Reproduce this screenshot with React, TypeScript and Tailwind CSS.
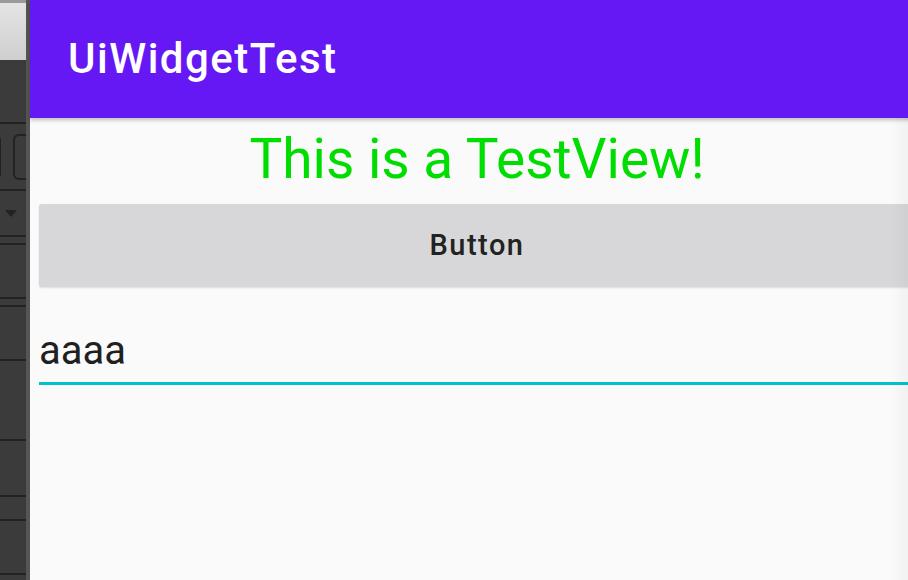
export default function App() {
  return (
    <div className="flex h-[580px] w-[908px] overflow-hidden bg-[#3b3b3b] font-['Roboto',sans-serif]">
      {/* left IDE strip */}
      <div className="flex w-[26px] shrink-0 flex-col">
        <div className="h-[60px] shrink-0 border-t-[3px] border-[#9a9a9a] bg-gradient-to-b from-[#e4e4e4] to-[#cfcfcf]" />
        <div className="h-[64px] shrink-0 border-b-2 border-[#222]" />
        <div className="flex h-[67px] shrink-0 items-center gap-[12px] border-b-2 border-[#222] pl-0">
          <div className="-ml-[14px] h-[46px] w-[21px] rounded-[6px] border-2 border-[#222]" />
          <div className="h-[46px] w-[20px] rounded-l-[6px] border-2 border-r-0 border-[#222]" />
        </div>
        <div className="flex h-[46px] shrink-0 items-center justify-center border-b-2 border-[#222]">
          <div className="ml-[-4px] h-0 w-0 border-x-[6px] border-t-[7px] border-x-transparent border-t-[#222]" />
        </div>
        <div className="h-[8px] shrink-0 border-b-2 border-[#222]" />
        <div className="h-[54px] shrink-0 border-b-2 border-[#222]" />
        <div className="h-[8px] shrink-0 border-b-2 border-[#222]" />
        <div className="h-[54px] shrink-0 border-b-2 border-[#222]" />
        <div className="h-[80px] shrink-0 border-b-2 border-[#222]" />
        <div className="h-[56px] shrink-0 border-b-2 border-[#222]" />
        <div className="h-[24px] shrink-0 border-b-2 border-[#222]" />
        <div className="h-[54px] shrink-0 border-b-2 border-[#222]" />
      </div>
      <div className="w-[4px] shrink-0 bg-[#555]" />

      {/* phone screen */}
      <div className="relative flex w-[894px] shrink-0 flex-col bg-[#fafafa]">
        <div className="relative z-10 flex h-[118px] shrink-0 items-center bg-[#6518f4] pl-[38px] shadow-[0_2px_4px_rgba(0,0,0,0.25)]">
          <span className="text-[42px] font-medium leading-none tracking-[1.5px] text-white">UiWidgetTest</span>
        </div>
        <div className="flex h-[82px] shrink-0 items-center justify-center">
          <span className="text-[55px] leading-none text-[#00dd00]">This is a TestView!</span>
        </div>
        <div className="px-[9px] pt-[4px]">
          <div className="flex h-[83px] items-center justify-center rounded-[3px] bg-[#d7d7d9] shadow-[0_1px_2px_rgba(0,0,0,0.12)]">
            <span className="text-[29px] font-medium leading-none tracking-[1.5px] text-[#222]">Button</span>
          </div>
        </div>
        <div className="px-[9px] pt-[44px]">
          <div className="border-b-[3px] border-[#00c3c9] pb-[11px]">
            <span className="text-[40px] leading-none text-[#202020]">aaaa</span>
          </div>
        </div>
        {/* emulator edge shade */}
        <div className="pointer-events-none absolute inset-y-0 left-[860px] w-[20px] bg-gradient-to-r from-transparent to-[rgba(0,0,0,0.04)]" />
      </div>
    </div>
  )
}
